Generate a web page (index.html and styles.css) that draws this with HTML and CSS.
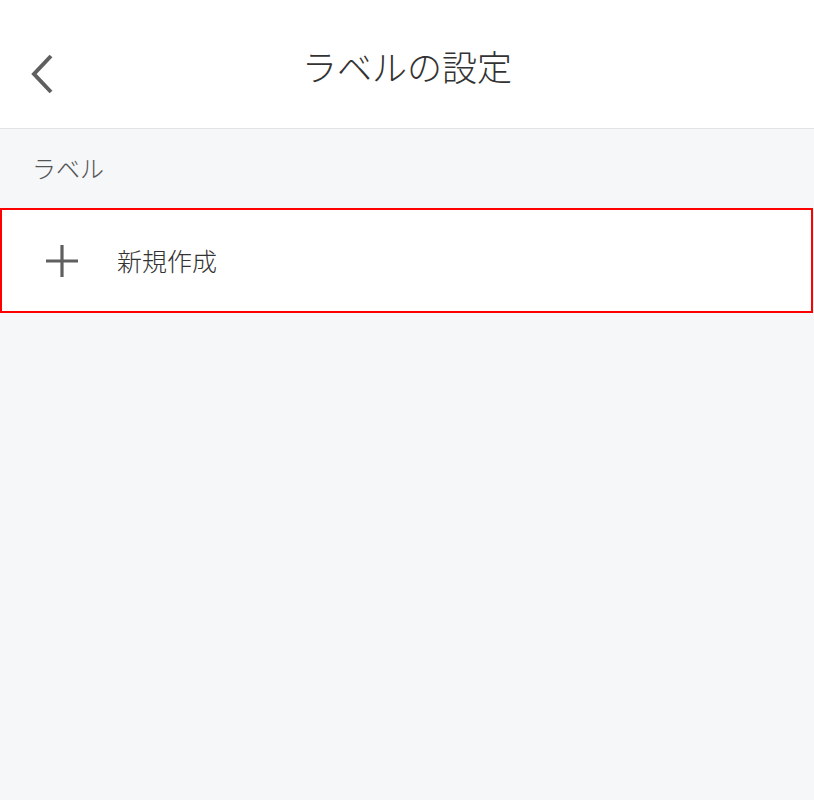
FILE: index.html
```html
<!DOCTYPE html>
<html lang="ja">
<head>
<meta charset="utf-8">
<link rel="stylesheet" href="styles.css">
</head>
<body>
<header class="topbar">
  <button class="back" aria-label="戻る">
    <svg width="30" height="44" viewBox="0 0 30 44"><path d="M24 4 L7 22 L24 40" fill="none" stroke="#5f5f5f" stroke-width="4"/></svg>
  </button>
  <h1 class="title">ラベルの設定</h1>
</header>
<main class="content">
  <div class="section-label">ラベル</div>
  <div class="row">
    <svg class="plus" width="32" height="32" viewBox="0 0 32 32"><path d="M0 16 H32 M16 0 V32" stroke="#5f5f5f" stroke-width="3.2"/></svg>
    <span class="row-text">新規作成</span>
  </div>
</main>
</body>
</html>
```

FILE: styles.css
```css
* { box-sizing: border-box; }
html, body { margin: 0; padding: 0; }
body {
  width: 814px;
  height: 800px;
  background: #f6f7f9;
  font-family: "Noto Sans CJK JP", "Noto Sans", sans-serif;
  color: #333;
  overflow: hidden;
}
.topbar {
  position: relative;
  height: 129px;
  background: #fff;
  border-bottom: 1px solid #e2e3e6;
  display: flex;
  align-items: center;
  justify-content: center;
}
.back {
  position: absolute;
  left: 27px;
  top: 52px;
  padding: 0;
  border: 0;
  background: none;
  display: flex;
}
.title {
  margin: 0;
  font-size: 35px;
  font-weight: 300;
  color: #333;
  line-height: 1;
  margin-top: 2px;
  letter-spacing: 0;
}
.section-label {
  height: 79px;
  padding: 22px 0 0 32px;
  font-size: 24px;
  font-weight: 300;
  line-height: 34px;
  color: #555;
}
.row {
  height: 105px;
  background: #fff;
  border: 2px solid #f00;
  display: flex;
  align-items: center;
  padding-left: 44px;
  margin-right: 1px;
}
.plus { flex: none; }
.row-text {
  margin-left: 39px;
  font-size: 25px;
  font-weight: 300;
  color: #333;
  line-height: 1;
  margin-top: 0;
}
```
